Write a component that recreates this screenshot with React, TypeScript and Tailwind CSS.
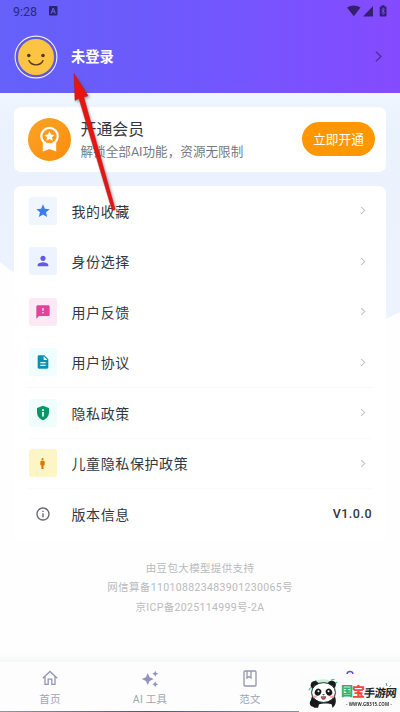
import React from "react";
import {
  MdAutoAwesome,
  MdDescription,
  MdFeedback,
  MdInfoOutline,
  MdMan,
  MdPerson,
  MdStar,
} from "react-icons/md";

function ShieldInfo({ className }: { className?: string }) {
  return (
    <svg viewBox="0 0 24 24" className={className} fill="currentColor">
      <path
        fillRule="evenodd"
        d="M12 1 3 4.5V11c0 5.6 3.8 10.4 9 12 5.2-1.6 9-6.4 9-12V4.5L12 1Zm-1.3 5.4h2.6V9h-2.6V6.4Zm0 4.2h2.6v6.8h-2.6v-6.8Z"
      />
    </svg>
  );
}

function Chevron({ className }: { className?: string }) {
  return (
    <svg viewBox="0 0 10 14" className={className} fill="none" stroke="currentColor">
      <path d="m2 1.5 5.8 5.5L2 12.5" />
    </svg>
  );
}

type Item = { label: string; tile: string; icon: React.ReactNode; line: string };

const items: Item[] = [
  { label: "我的收藏", tile: "bg-[#eff6ff] text-[#3b7cf0]", icon: <MdStar className="size-4" />, line: "border-transparent" },
  { label: "身份选择", tile: "bg-[#eef4ff] text-[#6558e8]", icon: <MdPerson className="size-4" />, line: "border-transparent" },
  { label: "用户反馈", tile: "bg-[#fde9f5] text-[#e0439a]", icon: <MdFeedback className="size-4" />, line: "border-transparent" },
  { label: "用户协议", tile: "bg-[#effefe] text-[#0c90b3]", icon: <MdDescription className="size-4" />, line: "border-[#f8f8f9]" },
  { label: "隐私政策", tile: "bg-[#effefa] text-[#089669]", icon: <ShieldInfo className="size-[16px]" />, line: "border-[#fafafb]" },
  { label: "儿童隐私保护政策", tile: "bg-[#fef5c6] text-[#d57a0a]", icon: <MdMan className="size-[13px]" />, line: "border-[#fafafb]" },
];

function StatusBar() {
  return (
    <div className="flex h-[22px] items-center justify-between pl-[13px] pr-[13px]">
      <div className="flex items-center gap-[12px]">
        <span className="w-[24px] pt-px font-['Roboto',sans-serif] text-[12.500px] leading-[22px] text-[#2c2a79]">9:28</span>
        <svg viewBox="0 0 9 10" className="h-[10px] w-[9px]">
          <rect width="8.5" height="9.5" rx="1" fill="#292570" />
          <path d="m2 7.6 2.2-5.5 2.2 5.5M2.8 5.8h2.9" fill="none" stroke="#6c65f4" strokeWidth="1" />
        </svg>
      </div>
      <svg viewBox="0 0 40 14" className="h-[14px] w-[40px] text-[#35206f]" fill="currentColor">
        <path d="M0 3.500C4 .7 9.500.7 13.500 3.500L6.800 12.300Z" />
        <path d="M26 2v10.500H16Z" />
        <path d="M34.500 1.200h3v1.200H38.700q.8 0 .8.8v8.500q0 .8-.8.8h-5.200q-.8 0-.8-.8V3.200q0-.8.8-.8h1Z" />
        <path d="m34.600 5.300 3.200 3.400-1.700 1.800V3.800l1.600 1.700-3.200 3.300" fill="none" stroke="#8250f8" strokeWidth=".8" />
      </svg>
    </div>
  );
}

function Avatar() {
  return (
    <svg viewBox="0 0 44 44" className="size-[44px] shrink-0">
      <circle cx="22" cy="22" r="20.900" fill="#6159dc" stroke="#eeefff" strokeWidth="1.100" />
      <circle cx="22" cy="22" r="18" fill="#fcc443" />
      <circle cx="14.800" cy="20.500" r="1.800" fill="#55391b" />
      <circle cx="29" cy="20.500" r="1.800" fill="#55391b" />
      <path d="M15 25.600c2.700 5.600 11.300 5.600 14 0" fill="none" stroke="#55391b" strokeWidth="1.300" strokeLinecap="round" />
    </svg>
  );
}

function Medal() {
  return (
    <span className="flex size-[43px] shrink-0 items-center justify-center rounded-full bg-gradient-to-br from-[#fba424] to-[#fa8c0b]">
      <svg viewBox="0 0 22 28" className="h-[27px] w-[21px]">
        <path d="M4 15v11.500l7-2.600 7 2.600V15Z" fill="#fff" />
        <circle cx="11" cy="10.500" r="8.600" fill="#fb9a1b" stroke="#fff" strokeWidth="2.300" />
        <path d="m11 5.400 1.600 3.300 3.700.5-2.700 2.500.7 3.600-3.300-1.800-3.300 1.800.7-3.600-2.700-2.500 3.700-.5Z" fill="#fff" />
      </svg>
    </span>
  );
}

function Panda() {
  return (
    <svg viewBox="0 0 36 34" className="h-[32px] w-[33px] shrink-0">
      <path d="M4 15C4 5 11 2 18 2s14 4 14 14-6 14-14 14S4 25 4 15Z" fill="#c8eed9" />
      <path d="m2 14 2-3M8 6l2-3M26 3l4-1M30 7l3-2" stroke="#4bba86" strokeWidth="1.300" />
      <circle cx="8.500" cy="8.500" r="4.500" fill="#171c1c" />
      <circle cx="27" cy="8" r="4.500" fill="#171c1c" />
      <path d="M6 20c4 3 20 3 24 0 3 6 1 11-2 13H8c-4-3-5-8-2-13Z" fill="#171c1c" />
      <ellipse cx="18" cy="16.500" rx="13" ry="10.800" fill="#fff" stroke="#1a2121" strokeWidth="1" />
      <ellipse cx="12" cy="16" rx="3.400" ry="4" transform="rotate(30 12 16)" fill="#15191a" />
      <ellipse cx="24" cy="16" rx="3.400" ry="4" transform="rotate(-30 24 16)" fill="#15191a" />
      <circle cx="12.500" cy="15" r="1.100" fill="#fff" />
      <circle cx="23.500" cy="15" r="1.100" fill="#fff" />
      <path d="M16.500 18.300h3L18 19.800Z" fill="#17191b" />
      <path d="M15.500 21h5c0 4-5 4-5 0Z" fill="#e54857" stroke="#222" strokeWidth=".6" />
      <ellipse cx="8.500" cy="21" rx="2.300" ry="1.400" fill="#f7a3a9" />
      <ellipse cx="27.500" cy="21" rx="2.300" ry="1.400" fill="#f7a3a9" />
      <ellipse cx="7.500" cy="28" rx="4.500" ry="4" fill="#15191a" />
      <path d="M13 29.500c3-1.500 12-1.500 14 0l1 4.500H12Z" fill="#fff" />
    </svg>
  );
}

function Watermark() {
  return (
    <div className="absolute left-[299px] top-[674px] flex h-[38px] w-[101px] items-center bg-[#fcfcfd] pl-[8px]">
      <Panda />
      <div className="relative h-[34px] w-[60px] whitespace-nowrap">
        <div className="flex items-center pl-px pt-[6px] font-black leading-[20px]">
          <span className="w-[11px] text-[12px] text-[#26b374]">国</span>
          <span className="w-[12px] text-[13px] text-[#ee4a42]">宝</span>
          <span className="-skew-x-6 pt-[3px] text-[11.300px] font-bold leading-[17px] tracking-[-0.500px] text-[#202528]">手游网</span>
        </div>
        <div className="absolute left-[6px] top-[25px] origin-left scale-x-[.8] font-['Open_Sans',sans-serif] text-[5.500px] font-bold leading-[7px] tracking-[0.100px] text-[#303537]">
          - WWW.GB315.COM -
        </div>
        <svg viewBox="0 0 8 6" className="absolute left-[45px] top-[6px] h-[6px] w-[8px]">
          <path d="m1 1 1 3M6 3 4.500 5" stroke="#519a79" strokeWidth="1" />
        </svg>
      </div>
    </div>
  );
}

const tab = "flex flex-1 flex-col items-center text-[10.500px] leading-[14px] tracking-[0.200px] text-[#a1a5b4]";

export default function App() {
  return (
    <div className="relative h-[712px] w-[400px] overflow-hidden bg-[#fefefe] font-['Roboto','Noto_Sans_CJK_SC',sans-serif]">
      <svg viewBox="0 0 400 260" className="absolute left-0 top-[92px] h-[260px] w-[400px]">
        <defs>
          <linearGradient id="backdrop" x1="0" x2="0" y1="0" y2="1">
            <stop stopColor="#f1f6ff" />
            <stop offset=".15" stopColor="#eaf2fe" />
            <stop offset="1" stopColor="#edf3ff" />
          </linearGradient>
        </defs>
        <path d="M0 0h400v220L386 227Q180 270 14 181L0 170Z" fill="url(#backdrop)" />
      </svg>

      <div className="relative flex h-full flex-col">
        <header className="h-[92.500px] shrink-0 bg-gradient-to-r from-[#6461f9] via-[#7057fd] to-[#854aff]">
          <StatusBar />
          <div className="flex h-[70px] items-center pb-[1px] pl-[14px] pr-[17px]">
            <Avatar />
            <span className="ml-[13px] flex-1 text-[14.300px] font-bold leading-[20px] text-white">未登录</span>
            <Chevron className="h-[13px] w-[9px] text-[#482b8e] [stroke-width:1.3]" />
          </div>
        </header>

        <main className="flex flex-1 flex-col px-[14px] pt-[14.500px]">
          <section className="flex h-[65px] shrink-0 items-center rounded-[7px] bg-white pl-[14px] pr-[11px]">
            <Medal />
            <div className="ml-[9.500px] flex-1 whitespace-nowrap pt-[2px]">
              <div className="text-[15.900px] leading-[23px] text-[#323741]">开通会员</div>
              <div className="text-[12.600px] leading-[22px] text-[#777b80]">解锁全部AI功能，资源无限制</div>
            </div>
            <button className="mb-px h-[34px] w-[73px] rounded-full bg-[#ff9800] pt-px text-[12.700px] leading-[33px] text-white">立即开通</button>
          </section>

          <section className="mt-[14px] h-[355px] shrink-0 rounded-[7px] bg-white px-[14px]">
            {items.map((item) => (
              <div key={item.label} className={`flex h-[50.500px] items-center border-b ${item.line}`}>
                <span className={`ml-[0.500px] flex size-[28px] items-center justify-center rounded-[3px] ${item.tile}`}>{item.icon}</span>
                <span className="ml-[15px] flex-1 pt-[1.500px] text-[14px] leading-[20px] tracking-[0.600px] text-[#333740]">{item.label}</span>
                <Chevron className="mr-[6px] h-[9px] w-[6px] text-[#bdbfc3] [stroke-width:1.7]" />
              </div>
            ))}
            <div className="flex h-[50px] items-center">
              <span className="ml-[0.500px] flex size-[28px] items-center justify-center text-[#62656e]">
                <MdInfoOutline className="size-4" />
              </span>
              <span className="ml-[15px] flex-1 pt-[1px] text-[14px] leading-[20px] tracking-[0.600px] text-[#333740]">版本信息</span>
              <span className="text-[12.500px] font-medium leading-[20px] tracking-[0.500px] text-[#34373d]">V1.0.0</span>
            </div>
          </section>

          <footer className="mt-[18px] text-center text-[10.500px] leading-[19.400px] tracking-[0.350px] text-[#b9bbbd]">
            <p>由豆包大模型提供支持</p>
            <p>网信算备110108823483901230065号</p>
            <p>京ICP备2025114999号-2A</p>
          </footer>
        </main>

        <div className="h-[8px] shrink-0 bg-gradient-to-b from-[#fefefe] to-[#f5f6f7]" />
        <nav className="flex h-[50px] shrink-0 bg-[#fdfdfe] pt-[8px]">
          <div className={tab}>
            <svg viewBox="0 0 16 16" className="mb-[7px] size-[16px]" fill="none" stroke="#9295b7" strokeWidth="1.300">
              <path d="m.8 8.200 7.200-6.700 7.200 6.700M3 6.700v7.600h3.200V9.200h3.600v5.100H13V6.700" />
            </svg>
            首页
          </div>
          <div className={tab}>
            <MdAutoAwesome className="mb-[5px] size-[18px] text-[#9295bb]" />
            AI 工具
          </div>
          <div className={tab}>
            <svg viewBox="0 0 14 17" className="mb-[6px] h-[17px] w-[14px]" fill="none" stroke="#9295b0" strokeWidth="1.300">
              <rect x="1" y="1" width="12" height="15" rx="1" />
              <path d="M4 1v7l2-1.500L8 8V1" />
            </svg>
            范文
          </div>
          <div className={tab}>
            <svg viewBox="0 0 14 14" className="size-[14px]" fill="none" stroke="#604ce0" strokeWidth="1.400">
              <circle cx="7" cy="4.500" r="3" />
            </svg>
          </div>
        </nav>
      </div>

      <div className="absolute bottom-0 left-0 h-px w-[299px] bg-gradient-to-r from-[#96949b] via-[#555282] to-[#8095a2]" />
      <Watermark />

      <svg viewBox="0 0 60 150" className="absolute left-[65px] top-[68px] h-[150px] w-[60px]">
        <path d="m12 9 13 20-5 2 31.500 110.500-3 1.500L15 33l-4 1Z" fill="#414957" opacity=".5" className="blur-[1.500px]" />
        <path d="M9 5.500 23 27.800l-4.200 1.400L50.200 141.500l-3 1L14 30.600 10 32.500Z" fill="#e81410" stroke="#b61a1a" strokeWidth=".5" />
      </svg>
    </div>
  );
}
